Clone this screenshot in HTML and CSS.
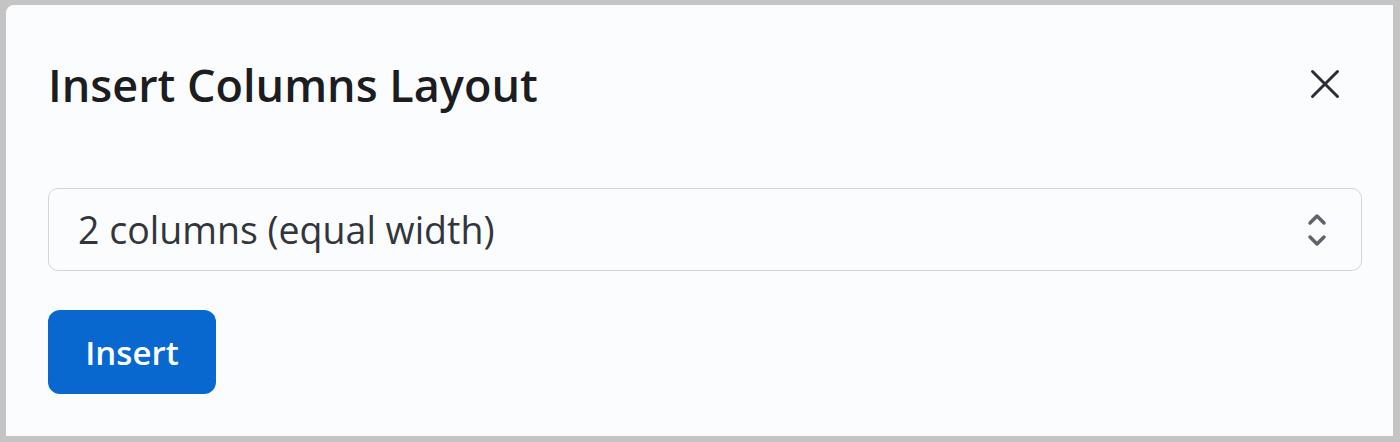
FILE: index.html
```html
<!DOCTYPE html>
<html>
<head>
<meta charset="utf-8">
<link rel="stylesheet" href="styles.css">
</head>
<body>
<div class="dialog">
  <div class="header">
    <h1 class="title">Insert Columns Layout</h1>
    <button class="close" aria-label="Close">
      <svg width="30" height="30" viewBox="0 0 30 30"><path d="M2.5 2.5L27.5 27.5M27.5 2.5L2.5 27.5" stroke="#2b2f35" stroke-width="3" stroke-linecap="round" fill="none"/></svg>
    </button>
  </div>
  <div class="select">
    <span class="select-text">2 columns (equal width)</span>
    <svg class="chev" width="22" height="36" viewBox="0 0 22 36"><path d="M4 11L11 4L18 11M4 25L11 32L18 25" stroke="#5f636a" stroke-width="3.5" stroke-linecap="round" stroke-linejoin="round" fill="none"/></svg>
  </div>
  <button class="insert">Insert</button>
</div>
</body>
</html>
```
FILE: styles.css
```css
html, body { margin: 0; padding: 0; }
body {
  background: #c4c4c4;
  padding: 5px 7px 6px 6px;
  height: 442px;
  box-sizing: border-box;
  font-family: "Open Sans", "Noto Sans", sans-serif;
}
.dialog {
  background: #fbfcfe;
  height: 431px;
  border-radius: 8px 0 0 0;
  box-sizing: border-box;
  padding: 0 31px 0 42px;
}
.header {
  display: flex;
  align-items: center;
  justify-content: space-between;
  height: 158px;
}
.title {
  margin: 0;
  font-size: 45px;
  font-weight: 600;
  color: #1b1d21;
  letter-spacing: 0;
}
.close {
  border: 0;
  background: none;
  padding: 0;
  width: 36px;
  height: 36px;
  display: flex;
  align-items: center;
  justify-content: center;
  margin-right: 19px;
}
.select {
  margin-top: 25px;
  height: 83px;
  border: 1.5px solid #cfd5dc;
  border-radius: 10px;
  box-sizing: border-box;
  display: flex;
  align-items: center;
  justify-content: space-between;
  padding: 0 33px 0 29px;
  background: #fbfcfe;
}
.select-text {
  font-size: 37.5px;
  color: #32363c;
}
.insert {
  margin-top: 39px;
  width: 168px;
  height: 84px;
  border: 0;
  border-radius: 12px;
  background: #0868cf;
  color: #fff;
  font-family: "Open Sans", "Noto Sans", sans-serif;
  font-size: 33px;
  font-weight: 600;
}
```
